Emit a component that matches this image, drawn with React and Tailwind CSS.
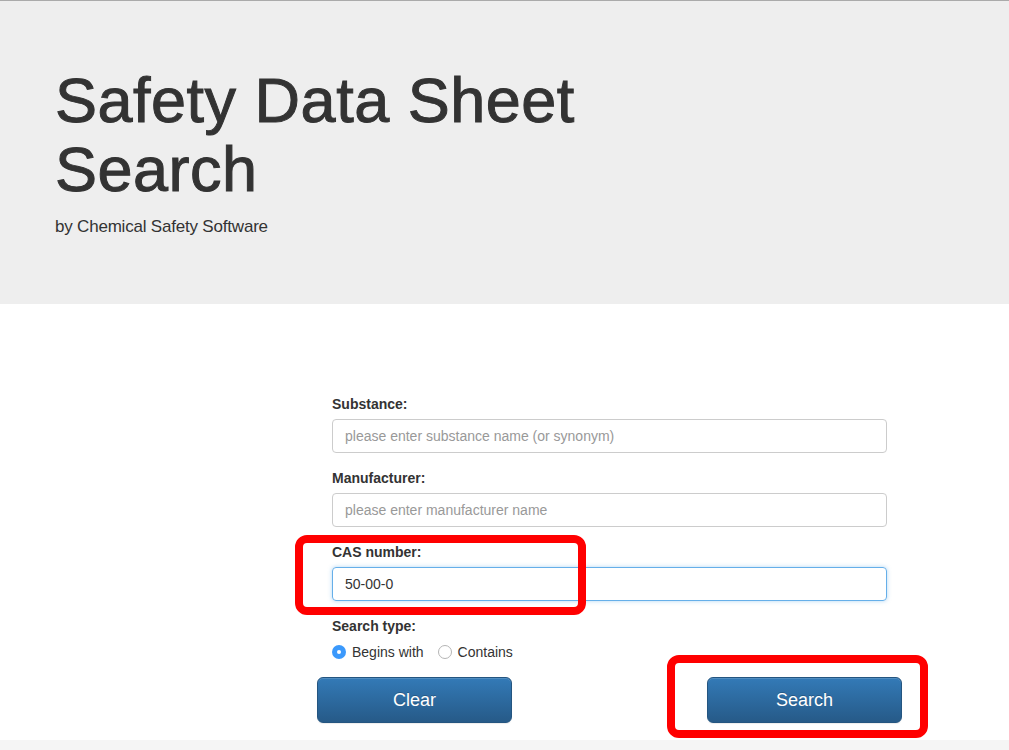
export default function App() {
  return (
    <div className="relative min-h-[750px] bg-white" style={{ fontFamily: '"Liberation Sans", Arial, sans-serif' }}>
      <div className="h-[304px] border-t border-[#aaaaaa] bg-[#eeeeee] pl-[55px] pt-[65px] text-[#333333]">
        <h1 className="text-[63px] leading-[1.1] font-medium tracking-[0.5px] [-webkit-text-stroke:1px_#333333]">
          Safety Data Sheet
          <br />
          Search
        </h1>
        <p className="mt-[8px] text-[17px] leading-[27px] font-light text-[#333333] tracking-[-0.2px]">by Chemical Safety Software</p>
      </div>

      <div className="h-[436px] pt-[90px]">
        <div className="ml-[332px] w-[555px] text-[14px] text-[#333333]">
          <Field label="Substance:" placeholder="please enter substance name (or synonym)" />
          <Field label="Manufacturer:" placeholder="please enter manufacturer name" />
          <Field label="CAS number:" value="50-00-0" focused />
          <div className="text-[14px] leading-[20px] font-bold">Search type:</div>
          <div className="mt-[6px] flex h-[20px] items-center">
            <span className="flex h-[14px] w-[14px] items-center justify-center rounded-full bg-[#3b99fc]">
              <span className="h-[4px] w-[4px] rounded-full bg-white" />
            </span>
            <span className="ml-[6px]">Begins with</span>
            <span className="ml-[14px] h-[14px] w-[14px] rounded-full border border-[#b5b5b5] bg-white" />
            <span className="ml-[6px]">Contains</span>
          </div>
        </div>
        <div className="mt-[15px] flex">
          <Btn className="ml-[317px]">Clear</Btn>
          <Btn className="ml-[195px]">Search</Btn>
        </div>
      </div>

      <div className="h-[10px] bg-[#f5f5f5]" />

      <div className="pointer-events-none absolute left-[295px] top-[535px] h-[80px] w-[291px] rounded-[12px] border-[8px] border-[#ff0000]" />
      <div className="pointer-events-none absolute left-[667px] top-[655px] h-[83px] w-[261px] rounded-[12px] border-[8px] border-[#ff0000]" />
    </div>
  );
}

function Field({ label, placeholder, value, focused }) {
  return (
    <div className="mb-[15px]">
      <div className="mb-[5px] text-[14px] leading-[20px] font-bold">{label}</div>
      <div
        className={
          "flex h-[34px] items-center rounded-[4px] border px-[12px] text-[14px] " +
          (focused
            ? "border-[#66afe9] shadow-[0_0_4px_rgba(102,175,233,0.5)] text-[#333333]"
            : "border-[#cccccc] text-[#999999]")
        }
      >
        {value || placeholder}
      </div>
    </div>
  );
}

function Btn({ children, className }) {
  return (
    <div
      className={
        "flex h-[46px] w-[195px] items-center justify-center rounded-[6px] border border-[#245580] bg-gradient-to-b from-[#337ab7] to-[#265a88] text-[18px] text-white shadow-[inset_0_1px_0_rgba(255,255,255,0.15),0_1px_1px_rgba(0,0,0,0.075)] [text-shadow:0_-1px_0_rgba(0,0,0,0.2)] " +
        className
      }
    >
      {children}
    </div>
  );
}
